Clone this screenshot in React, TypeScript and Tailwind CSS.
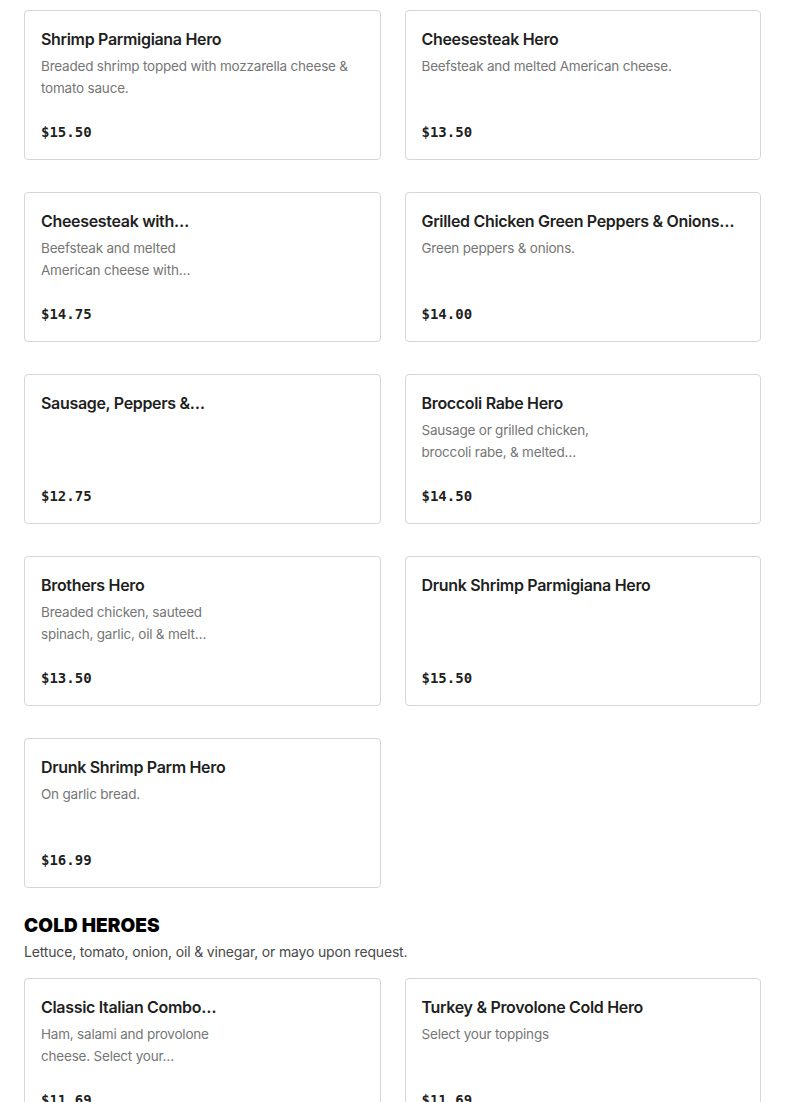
import { Fragment } from 'react'

type Item = { name: string; desc: string[]; price: string }

const HOT: Item[] = [
  { name: 'Shrimp Parmigiana Hero', desc: ['Breaded shrimp topped with mozzarella cheese &', 'tomato sauce.'], price: '$15.50' },
  { name: 'Cheesesteak Hero', desc: ['Beefsteak and melted American cheese.'], price: '$13.50' },
  { name: 'Cheesesteak with…', desc: ['Beefsteak and melted', 'American cheese with…'], price: '$14.75' },
  { name: 'Grilled Chicken Green Peppers & Onions…', desc: ['Green peppers & onions.'], price: '$14.00' },
  { name: 'Sausage, Peppers &…', desc: [], price: '$12.75' },
  { name: 'Broccoli Rabe Hero', desc: ['Sausage or grilled chicken,', 'broccoli rabe, & melted…'], price: '$14.50' },
  { name: 'Brothers Hero', desc: ['Breaded chicken, sauteed', 'spinach, garlic, oil & melt…'], price: '$13.50' },
  { name: 'Drunk Shrimp Parmigiana Hero', desc: [], price: '$15.50' },
  { name: 'Drunk Shrimp Parm Hero', desc: ['On garlic bread.'], price: '$16.99' },
]

const COLD: Item[] = [
  { name: 'Classic Italian Combo…', desc: ['Ham, salami and provolone', 'cheese. Select your…'], price: '$11.69' },
  { name: 'Turkey & Provolone Cold Hero', desc: ['Select your toppings'], price: '$11.69' },
]

function MenuCard({ item }: { item: Item }) {
  return (
    <div className="flex h-[150px] flex-col rounded-[4px] border border-[#d6d6d6] bg-white px-4 pt-4 pb-[17px]">
      <p className="whitespace-nowrap text-[16px] font-semibold leading-6 tracking-[-0.02em] text-[#1f1f1f]">
        {item.name}
      </p>
      <p className="mt-1 whitespace-nowrap text-[13.5px] leading-[22px] tracking-[-0.015em] text-[#767676]">
        {item.desc.map((line, i) => (
          <Fragment key={i}>
            {i > 0 && <br />}
            {line}
          </Fragment>
        ))}
      </p>
      <p className="mt-auto font-['DejaVu_Sans_Mono',monospace] text-[14px] font-bold leading-5 text-[#1f1f1f]">
        {item.price}
      </p>
    </div>
  )
}

export default function App() {
  return (
    <div className="min-h-screen bg-white px-6 pt-[10px] font-['Inter',sans-serif]">
      <div className="grid grid-cols-2 gap-x-6 gap-y-8">
        {HOT.map((item) => (
          <MenuCard key={item.name} item={item} />
        ))}
      </div>

      <h2 className="mt-6 text-[19px] font-black uppercase leading-7 tracking-[0.005em] text-black">
        Cold Heroes
      </h2>
      <p className="mt-px text-[14px] leading-[22px] tracking-[-0.012em] text-[#4a4a4a]">
        Lettuce, tomato, onion, oil &amp; vinegar, or mayo upon request.
      </p>

      <div className="mt-[15px] grid grid-cols-2 gap-x-6 gap-y-8">
        {COLD.map((item) => (
          <MenuCard key={item.name} item={item} />
        ))}
      </div>
    </div>
  )
}
